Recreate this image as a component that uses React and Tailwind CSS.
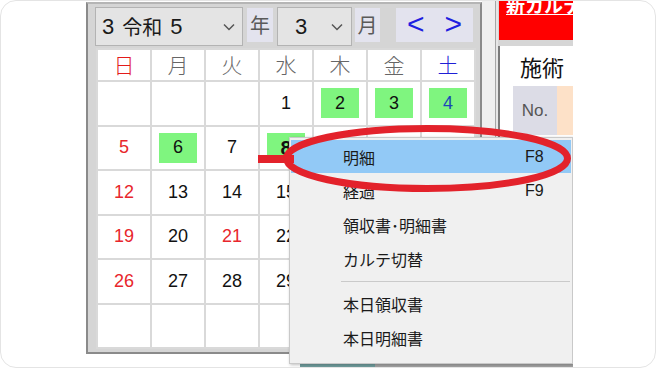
import React from "react";

const JP = { fontFamily: '"Noto Sans CJK JP", "Noto Sans", sans-serif' };
const NUM = { fontFamily: '"Liberation Sans", Arial, sans-serif' };

const weekdays = [
  { t: "日", c: "text-[#e31b1b]" },
  { t: "月", c: "text-[#666666]" },
  { t: "火", c: "text-[#666666]" },
  { t: "水", c: "text-[#666666]" },
  { t: "木", c: "text-[#666666]" },
  { t: "金", c: "text-[#666666]" },
  { t: "土", c: "text-[#1f1fd6]" },
];

const days = [];
for (let i = 0; i < 3; i++) days.push(null);
for (let d = 1; d <= 31; d++) days.push(d);
while (days.length < 42) days.push(null);

const green = [2, 3, 4, 6, 8];
const red = [5, 12, 19, 26, 21];
const blue = [4, 11, 18, 25];

function Chevron() {
  return (
    <svg width="12" height="8" viewBox="0 0 12 8">
      <polyline points="1,1.5 6,6.5 11,1.5" fill="none" stroke="#555" strokeWidth="1.5" />
    </svg>
  );
}

function DayCell({ d }) {
  let color = "text-[#111111]";
  if (d && red.includes(d)) color = "text-[#e8262c]";
  else if (d && blue.includes(d)) color = "text-[#1c47b8]";
  const isGreen = d && green.includes(d);
  return (
    <div className="border-r-2 border-b-2 border-[#d9d9d9] bg-white flex items-center justify-center">
      {d && (
        <div
          className={`w-[38px] h-[30px] flex items-center justify-center ${color} ${
            isGreen ? "bg-[#7ff57f]" : ""
          } ${d === 8 ? "font-bold text-[20px]" : "text-[18px]"}`}
          style={NUM}
        >
          {d}
        </div>
      )}
    </div>
  );
}

function MenuItem({ label, shortcut, active }) {
  return (
    <div
      className={`h-[33px] my-[1px] flex items-center text-[16px] text-[#1a1a1a] ${
        active ? "bg-[#92c9f6]" : ""
      }`}
    >
      <span className="pl-[52px] w-[234px]" style={JP}>
        {label}
      </span>
      {shortcut && (
        <span style={NUM} className="text-[16px]">
          {shortcut}
        </span>
      )}
    </div>
  );
}

export default function App() {
  return (
    <div className="relative w-[656px] h-[368px] rounded-[16px] border border-[#e4e4e4] bg-white overflow-hidden">
      <div className="relative ml-[85px] -mt-px w-[487px] h-[367px] overflow-hidden flex">
        {/* Calendar panel */}
        <div className="mt-[2px] w-[396px] h-[352px] border-2 border-[#8a8a8a] border-t-[#b5b5b5] bg-[#d5d5d5] flex flex-col">
          {/* toolbar */}
          <div className="flex items-start pt-[3px] pl-[7px]" style={JP}>
            <div className="w-[148px] h-[39px] bg-[#e4e4e4] border border-[#b3b3b3] flex items-center pl-[6px] pr-[7px]">
              <span className="flex-1 text-[22px] text-[#1a1a1a] flex items-center gap-[8px]">
                <span style={NUM}>3</span>
                <span className="text-[20px]">令和</span>
                <span style={NUM}>5</span>
              </span>
              <Chevron />
            </div>
            <div className="ml-[4px] mt-[1px] w-[26px] h-[34px] bg-[#e3e3ee] flex items-center justify-center text-[20px] text-[#5a5a5a]">
              年
            </div>
            <div className="ml-[4px] w-[75px] h-[39px] bg-[#e4e4e4] border border-[#b3b3b3] flex items-center pl-[17px] pr-[8px]">
              <span className="flex-1 text-[22px] text-[#1a1a1a]" style={NUM}>
                3
              </span>
              <Chevron />
            </div>
            <div className="ml-[3px] mt-[1px] w-[25px] h-[34px] bg-[#e3e3ee] flex items-center justify-center text-[20px] text-[#5a5a5a]">
              月
            </div>
            <div
              className="ml-[16px] mt-[1px] w-[77px] h-[34px] bg-[#e3e3ee] flex items-center justify-center gap-[20px] text-[30px] leading-none text-[#1f1fe0] pb-[3px]"
              style={NUM}
            >
              <span>&lt;</span>
              <span>&gt;</span>
            </div>
          </div>
          {/* grid */}
          <div className="mt-[2px] ml-[8px] w-[380px] grid grid-cols-7 grid-rows-[32px_repeat(6,44.5px)] border-l-2 border-t-2 border-[#d9d9d9]">
            {weekdays.map((w) => (
              <div
                key={w.t}
                className={`border-r-2 border-b-2 border-[#d9d9d9] bg-white flex items-center justify-center text-[21px] font-light ${w.c}`}
                style={JP}
              >
                {w.t}
              </div>
            ))}
            {days.map((d, i) => (
              <DayCell key={i} d={d} />
            ))}
          </div>
        </div>

        {/* gap region */}
        <div className="w-[13px] h-full bg-[#efefef]" />
        <div className="w-px h-full bg-[#a6a6a6]" />
        <div className="w-[2px] h-full bg-[#e6e6e6]" />

        {/* right panel */}
        <div className="w-[75px] h-full flex flex-col bg-[#d6d6d6]">
          <div className="h-[40px] ml-[1px] bg-[#ff0000] overflow-hidden pl-[7px]">
            <div className="-mt-[9px] text-[19px] font-bold text-white underline whitespace-nowrap" style={JP}>
              新カルテ
            </div>
          </div>
          <div className="h-[6px]" />
          <div className="flex-1 border-l-2 border-[#7a7a7a] bg-white flex flex-col">
            <div className="h-[40px] pl-[20px] flex items-center text-[22px] text-[#111]" style={JP}>
              施術
            </div>
            <div className="flex h-[49px] pl-[13px]">
              <div className="w-[44px] bg-[#dcdce6] flex items-center justify-center text-[17px] text-[#555]" style={NUM}>
                No.
              </div>
              <div className="flex-1 bg-[#fde1c8]" />
            </div>
          </div>
        </div>

        {/* bottom strip behind menu */}
        <div className="absolute left-[214px] top-[364px] w-[75px] h-[3px] bg-[#6f9c9c]" />
        <div className="absolute left-[289px] top-[364px] w-[198px] h-[3px] bg-[#a3a3a3]" />

        {/* context menu */}
        <div className="absolute left-[203px] top-[137px] w-[284px] h-[227px] bg-[#f0f0f0] border border-[#c9c9c9] shadow-[1px_1px_3px_rgba(0,0,0,0.25)] pt-[1px] px-px">
          <MenuItem label="明細" shortcut="F8" active />
          <MenuItem label="経過" shortcut="F9" />
          <MenuItem label="領収書･明細書" />
          <MenuItem label="カルテ切替" />
          <div className="h-[10px] flex items-center pl-[50px] pr-[1px]">
            <div className="h-px w-full bg-[#cacaca]" />
          </div>
          <MenuItem label="本日領収書" />
          <MenuItem label="本日明細書" />
        </div>

        {/* red annotation */}
        <svg
          className="absolute left-0 top-0 pointer-events-none"
          width="487"
          height="367"
          viewBox="0 0 487 367"
        >
          <line x1="172" y1="159" x2="208" y2="159" stroke="#e3222b" strokeWidth="8" />
          <ellipse cx="341" cy="158.5" rx="140.5" ry="30" fill="none" stroke="#e3222b" strokeWidth="7" />
        </svg>
      </div>
    </div>
  );
}
